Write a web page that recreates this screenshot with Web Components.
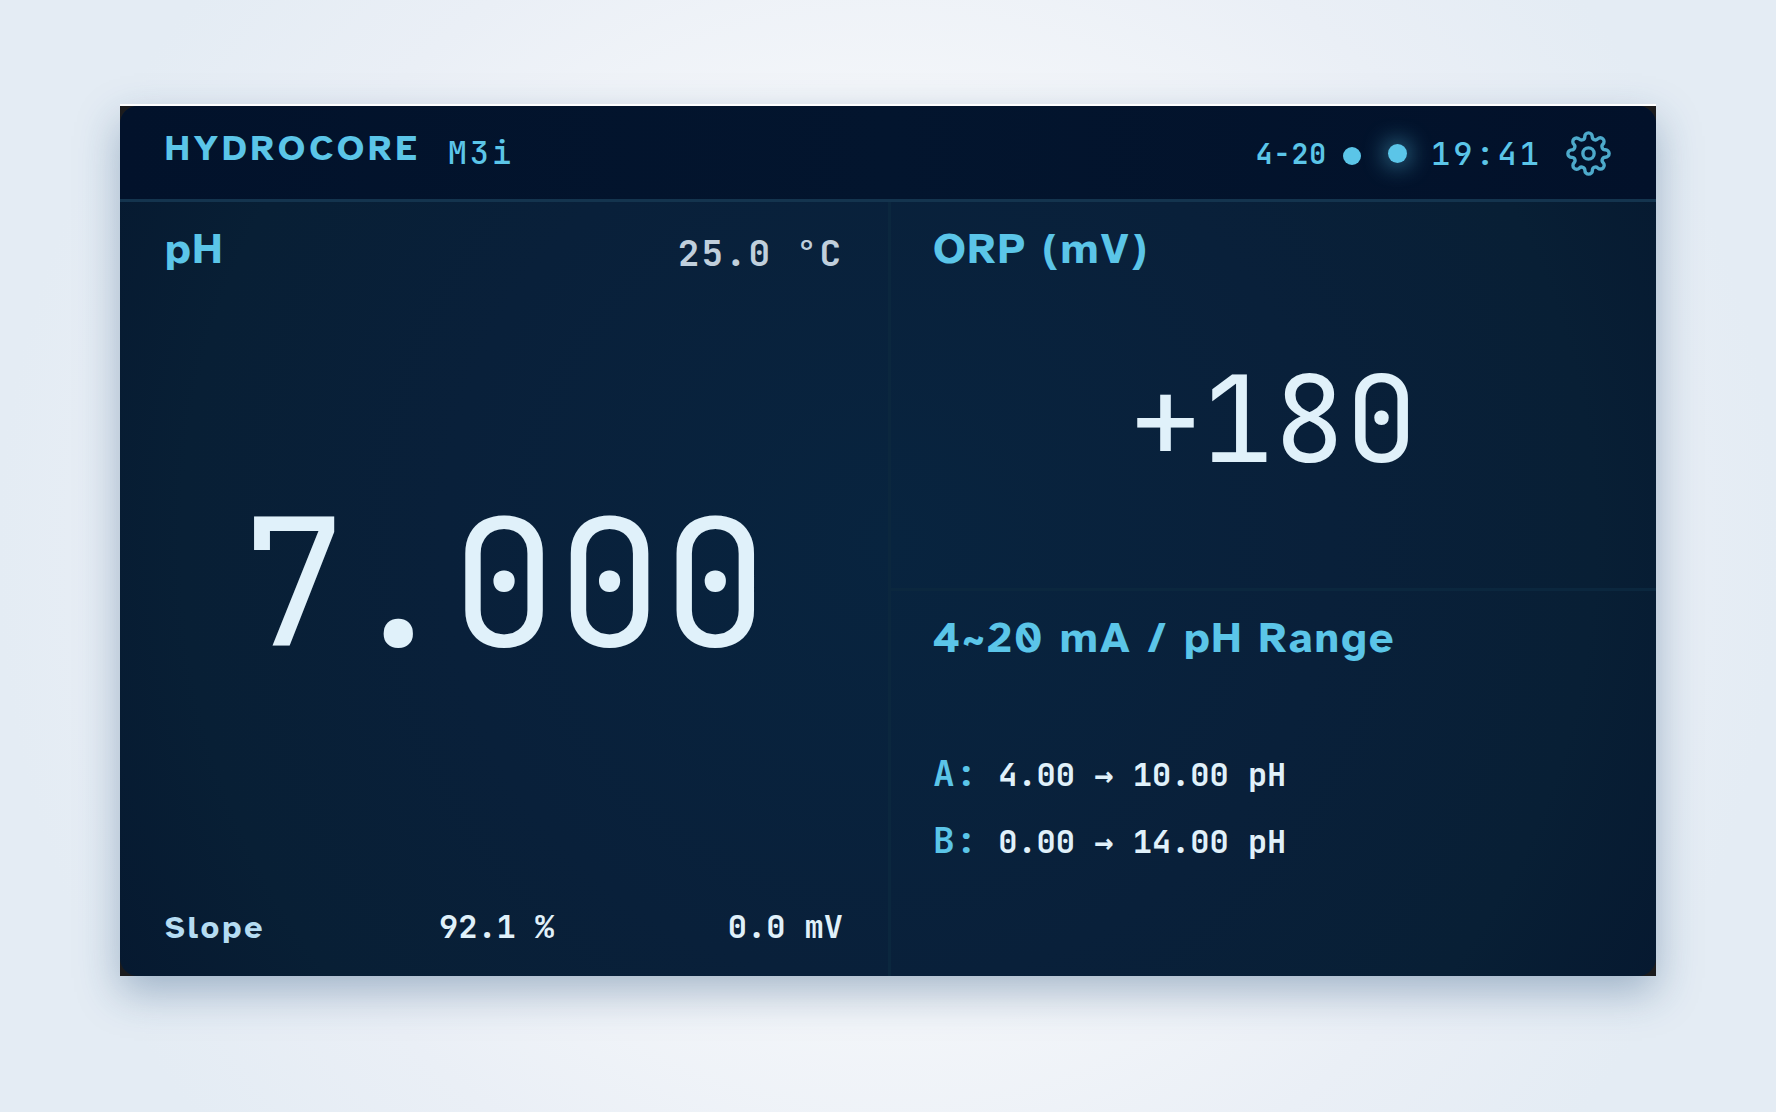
<!DOCTYPE html>
<html lang="en">
<head>
<meta charset="utf-8">
<title>HydroCore M3i</title>
<style>
    body {
        margin: 0;
        min-height: 100vh;
        display: flex;
        --sans: "Atkinson Hyperlegible", "Atkinson Hyperlegible Next", Inter, sans-serif;
        --mono: "JetBrains Mono", "DejaVu Sans Mono", monospace;
        --accent: #5bc5e8;
        --value: #e0f1fa;
        --pad: 45px;
        font-variant-numeric: tabular-nums;
        background: radial-gradient(circle at 50% 50%, #f6f8fb 0%, #f2f5f9 45%, #eaeff6 65%, #e4ecf4 85%);
    }
</style>
</head>
<body>
<hydro-device></hydro-device>

<script>
class StatusBar extends HTMLElement {
    constructor(){
        super();
        this.attachShadow({ mode: 'open'})
    }

    connectedCallback() {
        this.render()
    }

    render() {
        this.shadowRoot.innerHTML = `
        <style>
        :host {
            display: block;
            background: linear-gradient(90deg, #02122b, #03152e 50%, #02112a);
            border-bottom: 3px solid #14344e;
            color: var(--accent);
        }
        header {
            display: flex;
            align-items: center;
            justify-content: space-between;
            padding: 0 var(--pad);
            height: 93px;
        }
        .brand, .status {
            display: flex;
            align-items: center;
        }
        .brand {
            gap: 27px;
            padding-bottom: 10px;
        }
        h1 {
            margin: 0;
            font: 700 36px/40px var(--sans);
            letter-spacing: 4px;
        }
        .model, .time {
            font: 500 32px/40px var(--mono);
            letter-spacing: 3px;
        }
        .model {
            padding-top: 10px;
        }
        .status {
            padding-top: 2px;
        }
        .loop {
            display: flex;
            align-items: center;
            gap: 16px;
            font: 700 28px/40px var(--mono);
            letter-spacing: 1px;
            margin-right: 27px;
        }
        .dot {
            width: 18px;
            height: 18px;
            border-radius: 50%;
            background: var(--accent);
            margin-top: 4px;
        }
        .live {
            width: 19px;
            height: 19px;
            border-radius: 50%;
            background: var(--accent);
            box-shadow: 0 0 24px var(--accent);
            margin-right: 24px;
        }
        button {
            display: block;
            margin-left: 24px;
            padding: 0;
            border: 0;
            background: none;
            color: inherit;
            opacity: .85;
        }
        svg {
            display: block;
            width: 45px;
            height: 45px;
            overflow: visible;
        }
        </style>
        <header>
            <div class="brand">
                <h1>HYDROCORE</h1>
                <span class="model">M3i</span>
            </div>
            <div class="status">
                <span class="loop">4-20 <i class="dot"></i></span>
                <i class="live"></i>
                <time class="time">19:41</time>
                <button type="button" aria-label="Settings">
                    <svg viewBox="0 0 24 24" fill="none" stroke="currentColor" stroke-width="1.8" stroke-linecap="round" stroke-linejoin="round">
                        <circle cx="12" cy="12" r="3"/>
                        <path d="M19.4 15a1.65 1.65 0 0 0 .33 1.82l.06.06a2 2 0 0 1 0 2.83 2 2 0 0 1-2.83 0l-.06-.06a1.65 1.65 0 0 0-1.82-.33 1.65 1.65 0 0 0-1 1.51V21a2 2 0 0 1-2 2 2 2 0 0 1-2-2v-.09A1.65 1.65 0 0 0 9 19.4a1.65 1.65 0 0 0-1.82.33l-.06.06a2 2 0 0 1-2.83 0 2 2 0 0 1 0-2.83l.06-.06a1.65 1.65 0 0 0 .33-1.82 1.65 1.65 0 0 0-1.51-1H3a2 2 0 0 1-2-2 2 2 0 0 1 2-2h.09A1.65 1.65 0 0 0 4.6 9a1.65 1.65 0 0 0-.33-1.82l-.06-.06a2 2 0 0 1 0-2.83 2 2 0 0 1 2.83 0l.06.06a1.65 1.65 0 0 0 1.82.33H9a1.65 1.65 0 0 0 1-1.51V3a2 2 0 0 1 2-2 2 2 0 0 1 2 2v.09a1.65 1.65 0 0 0 1 1.51 1.65 1.65 0 0 0 1.82-.33l.06-.06a2 2 0 0 1 2.83 0 2 2 0 0 1 0 2.83l-.06.06a1.65 1.65 0 0 0-.33 1.82V9a1.65 1.65 0 0 0 1.51 1H21a2 2 0 0 1 2 2 2 2 0 0 1-2 2h-.09a1.65 1.65 0 0 0-1.51 1z"/>
                    </svg>
                </button>
            </div>
        </header>
        `;
    }
}

customElements.define('status-bar', StatusBar)


// One pane of the display: heading, an optional note on the right, a body and a footer
class MeterPanel extends HTMLElement {
    static get observedAttributes(){
        return["label"]
    }

    constructor(){
        super();
        this.attachShadow({ mode: 'open'})
    }

    attributeChangedCallback(prop, oldValue, newValue) {
        this[prop] = newValue;
        this.render()
    }

    render() {
        this.shadowRoot.innerHTML = `
        <style>
        :host {
            display: flex;
            flex-direction: column;
            box-sizing: border-box;
            padding: 23px var(--pad) 22px;
            color: var(--value);
        }
        .head {
            display: flex;
            justify-content: space-between;
            align-items: flex-start;
        }
        h2 {
            margin: 0;
            color: var(--accent);
            font: 700 43px/48px var(--sans);
            letter-spacing: 2px;
        }
        .note {
            padding-top: 4px;
            color: #c0cfdc;
            font: 600 36px/48px var(--mono);
            letter-spacing: 2px;
        }
        .body {
            flex: 1;
            display: flex;
            flex-direction: column;
            justify-content: center;
        }
        </style>
        <div class="head">
            <h2>${this.label}</h2>
            <span class="note"><slot name="note"></slot></span>
        </div>
        <div class="body"><slot></slot></div>
        <slot name="footer"></slot>
        `;
    }
}

customElements.define('meter-panel', MeterPanel)


class BigReading extends HTMLElement {
    constructor(){
        super();
        this.attachShadow({ mode: 'open'})
    }

    connectedCallback() {
        this.shadowRoot.innerHTML = `
        <style>
        :host {
            display: block;
            text-align: center;
            font: 450 120px/144px var(--mono);
        }
        :host([size="large"]) {
            font-size: 176px;
            line-height: 208px;
        }
        </style>
        <slot></slot>
        `;
    }
}

customElements.define('big-reading', BigReading)


class RangeRow extends HTMLElement {
    static get observedAttributes(){
        return["name", "from", "to"]
    }

    constructor(){
        super();
        this.attachShadow({ mode: 'open'})
    }

    attributeChangedCallback(prop, oldValue, newValue) {
        this[prop] = newValue;
        this.render()
    }

    render() {
        this.shadowRoot.innerHTML = `
        <style>
        :host {
            display: flex;
            align-items: baseline;
            gap: 20px;
            font: 600 32px/48px var(--mono);
        }
        b {
            color: var(--accent);
            font-weight: 600;
            font-size: 36px;
            letter-spacing: 1px;
        }
        i {
            font-family: "DejaVu Sans Mono", monospace;
            font-style: normal;
            line-height: 1;
        }
        </style>
        <b>${this.name}:</b>
        <span>${this.from} <i>→</i> ${this.to} pH</span>
        `;
    }
}

customElements.define('range-row', RangeRow)


class SlopeLine extends HTMLElement {
    constructor(){
        super();
        this.attachShadow({ mode: 'open'})
    }

    connectedCallback() {
        this.shadowRoot.innerHTML = `
        <style>
        :host {
            display: flex;
            justify-content: space-between;
            align-items: baseline;
            padding: 14px 0 2px;
            font: 600 32px/48px var(--mono);
        }
        strong {
            color: #b5dcf2;
            font: 700 32px/48px var(--sans);
            letter-spacing: 3px;
        }
        </style>
        <strong>Slope</strong>
        <slot></slot>
        `;
    }
}

customElements.define('slope-line', SlopeLine)


class HydroDevice extends HTMLElement {
    constructor(){
        super();
        this.attachShadow({ mode: 'open'})
    }

    connectedCallback() {
        this.render()
    }

    render() {
        this.shadowRoot.innerHTML = `
        <style>
        :host {
            flex: 1;
            display: flex;
            box-sizing: border-box;
            padding: 106px 120px 136px;
        }
        .case {
            flex: 1;
            display: flex;
            background: #1b1b1d;
            box-shadow: 0 -2px 0 #fff, 0 16px 40px rgba(30, 75, 120, .36);
        }
        .screen {
            flex: 1;
            display: flex;
            flex-direction: column;
            border-radius: 18px;
            overflow: hidden;
            background: radial-gradient(circle at 50% 50%, #08243f 0%, #09203a 50%, #081f35 80%, #061930 100%);
        }
        main {
            flex: 1;
            display: grid;
            grid-template-columns: 1fr 1fr;
        }
        .side {
            display: grid;
            grid-template-rows: 387fr 390fr;
            border-left: 3px solid #0b273e;
            --pad: 42px;
        }
        .side meter-panel + meter-panel {
            border-top: 3px solid #0b273e;
        }
        .rows {
            display: flex;
            flex-direction: column;
            gap: 17px;
        }
        </style>
        <div class="case">
            <div class="screen">
                <status-bar></status-bar>
                <main>
                    <meter-panel label="pH">
                        <span slot="note">25.0 °C</span>
                        <big-reading size="large">7.000</big-reading>
                        <slope-line slot="footer">
                            <span>92.1 %</span>
                            <span>0.0 mV</span>
                        </slope-line>
                    </meter-panel>
                    <div class="side">
                        <meter-panel label="ORP (mV)">
                            <big-reading>+180</big-reading>
                        </meter-panel>
                        <meter-panel label="4~20 mA / pH Range">
                            <div class="rows">
                                <range-row name="A" from="4.00" to="10.00"></range-row>
                                <range-row name="B" from="0.00" to="14.00"></range-row>
                            </div>
                        </meter-panel>
                    </div>
                </main>
            </div>
        </div>
        `;
    }
}

customElements.define('hydro-device', HydroDevice)
</script>
</body>
</html>
